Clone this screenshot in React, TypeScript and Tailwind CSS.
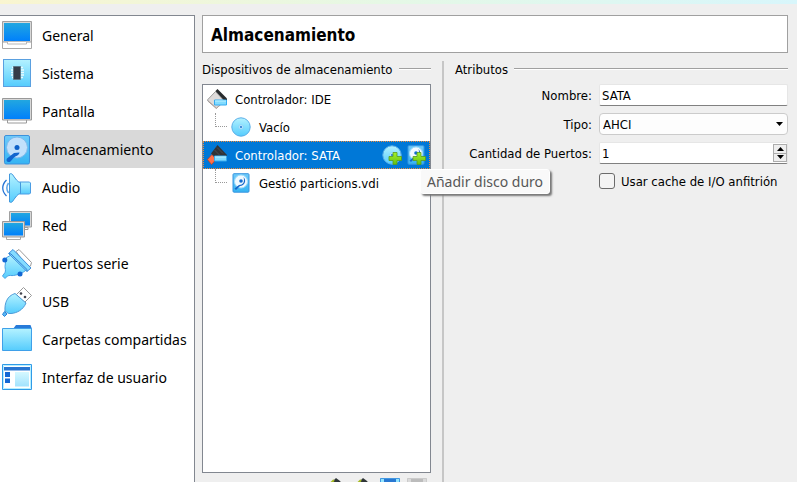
import React, { useState } from "react";

const Gradients = () => (
  <svg width="0" height="0" className="absolute" aria-hidden="true">
    <defs>
      <linearGradient id="screen" x1="0" y1="0" x2="0" y2="1">
        <stop offset="0" stopColor="#22a7e0" />
        <stop offset="1" stopColor="#0080fb" />
      </linearGradient>
      <linearGradient id="sky" x1="0" y1="0" x2="0" y2="1">
        <stop offset="0" stopColor="#b4f2ff" />
        <stop offset="1" stopColor="#55ccfd" />
      </linearGradient>
      <linearGradient id="disk" x1="0" y1="0" x2="0" y2="1">
        <stop offset="0" stopColor="#6fcbfa" />
        <stop offset="1" stopColor="#35b4f3" />
      </linearGradient>
      <linearGradient id="plus" x1="0" y1="0" x2="0" y2="1">
        <stop offset="0" stopColor="#a6f02c" />
        <stop offset="1" stopColor="#62c010" />
      </linearGradient>
    </defs>
  </svg>
);

const Svg30 = ({ children }: { children: React.ReactNode }) => (
  <svg width="30" height="30" viewBox="0 0 30 30" fill="none" className="shrink-0" aria-hidden="true">
    {children}
  </svg>
);

const GeneralIcon = () => (
  <Svg30>
    <path d="M.5 20.5h29v7h-29z" fill="#fff" stroke="#a8a8a8" />
    <path d="M.5 .5h29v20.500h-29z" fill="#d8d8d8" stroke="#a0a0a0" />
    <path d="M2 2h26v18h-26z" fill="url(#screen)" />
    <path d="M5.500 21v2h19v-2" fill="#fff" stroke="#b8b8b8" />
  </Svg30>
);

const SystemIcon = () => (
  <Svg30>
    <rect x="1.500" y=".5" width="27" height="27" fill="url(#sky)" stroke="#5aa0e0" />
    <path d="M10 8.500h11M9 11h13M9 13.500h13M9 16h13M10 18.500h11" stroke="#e9fbff" strokeWidth="1.300" />
    <path d="M11.500 7.500h7v13h-7z" fill="#353c48" stroke="#5b7888" />
  </Svg30>
);

const DisplayIcon = () => (
  <Svg30>
    <path d="M5.500 23v3h19v-3" fill="#fff" stroke="#9a9a9a" />
    <path d="M.5 1.500h29V23h-29z" fill="#d8d8d8" stroke="#999" />
    <path d="M2 3h26v19h-26z" fill="url(#screen)" />
  </Svg30>
);

const StorageIcon = () => (
  <Svg30>
    <rect x="2.500" y=".5" width="25" height="28.500" rx="1.500" fill="url(#disk)" stroke="#3c91dc" />
    <circle cx="15" cy="12.500" r="10.500" fill="#c2e0fb" stroke="#7eb9ed" />
    <circle cx="15" cy="12.500" r="2.500" fill="#0e61c8" />
    <path d="M17.500 17.500c-.8 3.500-3.500 3-6 5.500l-3 3.500c-2.500 1.500-5-.5-3.500-3l7-5.500z" fill="#1265ce" />
  </Svg30>
);

const AudioIcon = () => (
  <Svg30>
    <path d="M6.500 10C4.500 13 4.500 17 6.500 20" stroke="#5fa6e8" strokeWidth="1.500" />
    <path d="M4.500 7C-.5 12-.5 18 4.500 23" stroke="#2474d5" strokeWidth="1.300" />
    <path d="M18 9h9.500l1 1v10l-1 1H18z" fill="url(#sky)" stroke="#4b9de4" />
    <path d="M7.500 1c2-.8 3 0 4 2l3 4q1.500 2 4 2.500v11q-2.500.5-4 2.500l-3 4c-1 2-2 2.800-4 2z" fill="url(#sky)" stroke="#4298dd" />
  </Svg30>
);

const NetworkIcon = () => (
  <Svg30>
    <path d="M12 16.500h14v2H12z" fill="#fff" stroke="#999" />
    <path d="M7.500 .5h22V16h-22z" fill="#d7d7d7" stroke="#a0a0a0" />
    <path d="M9 2h19v12.500H9z" fill="url(#screen)" />
    <path d="M4.500 26v2.500h14V26" fill="#fff" stroke="#aaa" />
    <path d="M.5 10.500h22V26H.5z" fill="#d7d7d7" stroke="#999" />
    <path d="M2 12h19v12.500H2z" fill="url(#screen)" />
  </Svg30>
);

const SerialIcon = () => (
  <Svg30>
    <path d="m14 2.500 3-2 12.500 13-1 3.500-3 1z" fill="#fff" stroke="#9b9b9b" />
    <path d="M9 6 25 20.500l-3.500 2.500-3 2-7 1.500c-2 .3-4-.5-6 .5L3 29.500.5 27 3 23.500c1-2 0-4 0-6L4 9z" fill="url(#sky)" stroke="#48a2e5" />
    <path d="m6.500 4.500 4.500-4L29 19l-4 3.500z" fill="#84dcff" stroke="#3f8fdb" />
    <path d="m7 4.500 2 .5 16 15.500v2" stroke="#347fd1" />
    <circle cx="2.800" cy="11" r="2.500" fill="#1267d3" />
    <circle cx="18" cy="25" r="2.500" fill="#1267d3" />
  </Svg30>
);

const UsbIcon = () => (
  <Svg30>
    <path d="m14.500 7.500 7-7 8 8-7 7z" fill="#fff" stroke="#999" />
    <circle cx="19" cy="6.500" r="1.300" fill="#42434d" />
    <circle cx="23" cy="10" r="1.300" fill="#42434d" />
    <path d="m13 6.500 11 9.500c-3 7-9 10-15 10.500H6.500L3 24C2.500 16 5 9 13 6.500z" fill="url(#sky)" stroke="#4d9bd8" />
    <path d="m2.500 24.500 2.500 2.500-2.500 2.500-2-2z" fill="#57b4f2" stroke="#2984d7" />
  </Svg30>
);

const FolderIcon = () => (
  <Svg30>
    <path d="M11 4 14 0h14.500L30 4z" fill="#277ad8" />
    <path d="M.5 3.500h29v22H.5z" fill="url(#sky)" stroke="#3fa0e9" />
  </Svg30>
);

const InterfaceIcon = () => (
  <Svg30>
    <path d="M.5 1.500h29v25H.5z" fill="#fff" stroke="#309be8" />
    <path d="M1.500 2.500h27v23h-27z" stroke="#b5efff" />
    <path d="M2 4h26v3.500H2z" fill="#2875d1" />
    <path d="M3 9h5v5H3zM3 15.500h5v4.500H3z" fill="#1468d4" />
    <path d="M13 9h14v14.500H13z" fill="url(#sky)" opacity=".55" />
  </Svg30>
);

const ControllerIcon = ({ dark = false }: { dark?: boolean }) => (
  <svg width="20" height="20" viewBox="0 0 20 20" className="shrink-0" aria-hidden="true">
    {dark ? (
      <>
        <path d="m5 9.500 4 5-4.500 5-4-5z" fill="#ff7048" stroke="#c93e19" strokeWidth=".7" />
        <path d="m10.500 0 9.500 10v2H8L4 8.500z" fill="#303337" />
        <path d="m10 2.500 6 6M7.500 5l5 5" stroke="#4a4d50" />
      </>
    ) : (
      <>
        <path d="M8.500 2.500.8 10.500v1.500l8.500 7.500 8-7.500z" fill="#dedbda" stroke="#858585" strokeWidth=".8" />
        <path d="m1.500 12 8 7 4-3" stroke="#b9a49c" fill="none" strokeWidth=".8" />
        <path d="m8.500 2 2-2L20 9.500V12h-2.500z" fill="#282c2e" />
      </>
    )}
    <path d="M7.500 11h12v5h-12z" fill="#82dcff" stroke="#35aaf0" />
    <path d="M8 12h11" stroke="#bff2ff" />
  </svg>
);

const DiscShape = () => (
  <>
    <circle cx="10" cy="10" r="9.200" fill="url(#sky)" stroke="#5aaee8" />
    <circle cx="10" cy="10" r="2.300" fill="#b8e7ff" stroke="#8accf3" strokeWidth=".6" />
    <circle cx="10" cy="10" r=".9" fill="#0e66cc" />
  </>
);

const SmallDisk = () => (
  <>
    <rect x="2" y=".7" width="16" height="18.500" rx="1" fill="url(#disk)" stroke="#3994df" />
    <circle cx="10" cy="8.500" r="6.500" fill="#f0faff" stroke="#a4dcfa" />
    <circle cx="10" cy="8" r="1.800" fill="#126bd0" />
    <path d="M12.500 4c3.500 4 1 8.500-3.500 9l-4 4-1.500-1.500L8 12c4 0 6-3 4.500-8z" fill="#1766c9" />
  </>
);

const Plus = () => (
  <path d="M11 7.500h4v4h4.500v4H15v4h-4v-4H7v-4h4z" fill="url(#plus)" stroke="#559c20" strokeWidth=".8" />
);

const Svg20 = ({ children }: { children: React.ReactNode }) => (
  <svg width="20" height="20" viewBox="0 0 20 20" fill="none" className="shrink-0" aria-hidden="true">
    {children}
  </svg>
);

const AddControllerIcon = () => (
  <Svg20>
    <path d="m10 0 4 3 3 4H3l4-4z" fill="#303638" />
    <path d="m5 5 3-3" stroke="#a7bb24" strokeWidth="2" />
  </Svg20>
);

const AttachIcon = ({ disabled = false }: { disabled?: boolean }) => (
  <Svg20>
    <rect width="20" height="20" rx="1" fill={disabled ? "#dadada" : "#91e4ff"} />
    <path d="M4 0h12v9H4z" fill={disabled ? "#bcbcbc" : "#2878d2"} />
    <path d="M.5 20V.5h19V20" stroke={disabled ? "#cbcbcb" : "#4297e1"} />
  </Svg20>
);

const sections: { label: string; icon: React.FC }[] = [
  { label: "General", icon: GeneralIcon },
  { label: "Sistema", icon: SystemIcon },
  { label: "Pantalla", icon: DisplayIcon },
  { label: "Almacenamiento", icon: StorageIcon },
  { label: "Audio", icon: AudioIcon },
  { label: "Red", icon: NetworkIcon },
  { label: "Puertos serie", icon: SerialIcon },
  { label: "USB", icon: UsbIcon },
  { label: "Carpetas compartidas", icon: FolderIcon },
  { label: "Interfaz de usuario", icon: InterfaceIcon },
];

const GroupHeading = ({ children }: { children: React.ReactNode }) => (
  <h2 className="flex h-4 items-center gap-[6px] whitespace-nowrap">
    <span className="pt-[2px]">{children}</span>
    <span className="h-[2px] flex-1 border-t border-[#a0a0a0] bg-white" />
  </h2>
);

const Branch = () => (
  <span className="h-7 w-3 shrink-0" aria-hidden="true">
    <span className="block h-[14px] border-b border-l border-dotted border-[#999]" />
  </span>
);

export default function App() {
  const [section, setSection] = useState("Almacenamiento");
  const [name, setName] = useState("SATA");
  const [ports, setPorts] = useState(1);

  return (
    <div className="flex h-screen flex-col overflow-hidden bg-[#efefef] font-['DejaVu_Sans_Condensed','DejaVu_Sans',sans-serif] text-[13px] leading-4 text-black">
      <Gradients />
      <div className="h-1 shrink-0 bg-linear-to-r from-[#f9f5d0] via-[#e5f8e6] to-[#d8f6fb]" />
      <div className="flex min-h-0 flex-1 gap-[7px] pt-[11px] pr-[9px]">
        <nav className="w-[195px] shrink-0 border-t border-r border-[#828790] bg-white font-['Noto_Sans',sans-serif] text-[14px]">
          {sections.map(({ label, icon: Icon }) => (
            <button
              key={label}
              type="button"
              onClick={() => setSection(label)}
              className={`flex h-[38px] w-full items-center gap-[10px] pt-[2px] pl-[2px] whitespace-nowrap ${
                section === label ? "bg-[#d9d9d9]" : ""
              }`}
            >
              <Icon />
              {label}
            </button>
          ))}
        </nav>

        <main className="flex min-w-0 flex-1 flex-col">
          <h1 className="flex h-[38px] shrink-0 items-center border border-[#a0a0a0] bg-white px-2 pt-px text-[17px] font-bold">
            Almacenamiento
          </h1>

          <div className="flex min-h-0 flex-1 pt-2">
            <section className="flex w-[229px] shrink-0 flex-col">
              <GroupHeading>Dispositivos de almacenamiento</GroupHeading>
              <ul className="mt-[7px] min-h-0 flex-1 border border-[#828790] bg-white">
                <li className="flex h-7 items-center gap-2 pl-1">
                  <ControllerIcon />
                  <span className="pt-[2px]">Controlador: IDE</span>
                </li>
                <li className="flex h-7 items-center pl-3">
                  <Branch />
                  <span className="flex items-center gap-2 pl-1">
                    <Svg20>
                      <DiscShape />
                    </Svg20>
                    <span className="pt-[2px]">Vacío</span>
                  </span>
                </li>
                <li className="relative flex h-7 items-center border border-dotted border-[#ef8b3a] bg-[#0078d7] pr-[3px] pl-[3px] text-white">
                  <ControllerIcon dark />
                  <span className="flex-1 pt-[2px] pl-2">Controlador: SATA</span>
                  <span className="flex gap-1">
                    <button type="button" aria-label="Añadir unidad óptica">
                      <Svg20>
                        <DiscShape />
                        <Plus />
                      </Svg20>
                    </button>
                    <button type="button" aria-describedby="add-disk-tip" aria-label="Añadir disco duro">
                      <Svg20>
                        <SmallDisk />
                        <Plus />
                      </Svg20>
                    </button>
                  </span>
                  <span
                    id="add-disk-tip"
                    role="tooltip"
                    className="absolute top-[27px] left-[216px] z-10 rounded-[3px] border border-white bg-[#f9f9f9] px-[6px] pt-[2px] pb-px font-['Noto_Sans',sans-serif] text-[14px] leading-5 whitespace-nowrap text-[#575757] shadow-[2px_2px_2px_#777]"
                  >
                    Añadir disco duro
                  </span>
                </li>
                <li className="flex h-7 items-center pl-3">
                  <Branch />
                  <span className="flex items-center gap-2 pl-1">
                    <Svg20>
                      <SmallDisk />
                    </Svg20>
                    <span className="pt-[2px]">Gestió particions.vdi</span>
                  </span>
                </li>
              </ul>
              <div className="flex h-[9px] shrink-0 items-start justify-end gap-[7px] overflow-hidden pt-[5px] pr-1">
                <button type="button" aria-label="Añadir controlador">
                  <AddControllerIcon />
                </button>
                <button type="button" aria-label="Eliminar controlador">
                  <AddControllerIcon />
                </button>
                <button type="button" aria-label="Añadir conexión">
                  <AttachIcon />
                </button>
                <button type="button" aria-label="Eliminar conexión" disabled>
                  <AttachIcon disabled />
                </button>
              </div>
            </section>

            <div className="ml-[11px] w-[2px] shrink-0 bg-[#c6c6c6]" />

            <section className="min-w-0 flex-1 pl-[11px]">
              <GroupHeading>Atributos</GroupHeading>
              <form className="mt-[7px] grid grid-cols-[137px_minmax(0,1fr)] items-center gap-x-[7px] gap-y-[7px]">
                <label htmlFor="name" className="pt-[2px] text-right">
                  Nombre:
                </label>
                <input
                  id="name"
                  value={name}
                  onChange={(e) => setName(e.target.value)}
                  className="h-[22px] w-full rounded-[2px] border border-[#e6e6e6] border-b-[#808080] bg-white px-[2px] pt-px outline-none"
                />

                <label htmlFor="type" className="pt-[2px] text-right">
                  Tipo:
                </label>
                <div className="relative">
                  <select
                    id="type"
                    defaultValue="AHCI"
                    className="block h-[22px] w-full appearance-none rounded-[4px] border border-[#cbcbcb] bg-[#fdfdfd] px-[3px] pt-px outline-none"
                  >
                    <option>AHCI</option>
                  </select>
                  <svg width="7" height="4" viewBox="0 0 7 4" className="pointer-events-none absolute top-[9px] right-[5px]" aria-hidden="true">
                    <path d="M0 0h7L3.500 4z" />
                  </svg>
                </div>

                <label htmlFor="ports" className="pt-[2px] text-right">
                  Cantidad de Puertos:
                </label>
                <div className="flex h-[22px] rounded-[2px] border border-[#e6e6e6] border-b-[#808080] bg-white">
                  <input
                    id="ports"
                    value={ports}
                    onChange={(e) => setPorts(Number(e.target.value) || 1)}
                    className="min-w-0 flex-1 px-[2px] pt-px outline-none"
                  />
                  <div className="flex w-[14px] flex-col py-px">
                    <button
                      type="button"
                      aria-label="Aumentar"
                      onClick={() => setPorts(ports + 1)}
                      className="flex flex-1 items-center justify-center border border-[#adadad] bg-[#efefef]"
                    >
                      <svg width="7" height="4" viewBox="0 0 7 4">
                        <path d="M0 4h7L3.500 0z" />
                      </svg>
                    </button>
                    <button
                      type="button"
                      aria-label="Disminuir"
                      onClick={() => setPorts(Math.max(1, ports - 1))}
                      className="flex flex-1 items-center justify-center border border-t-0 border-[#adadad] bg-[#efefef]"
                    >
                      <svg width="7" height="4" viewBox="0 0 7 4">
                        <path d="M0 0h7L3.500 4z" />
                      </svg>
                    </button>
                  </div>
                </div>

                <label className="col-start-2 flex h-5 items-center gap-[6px] whitespace-nowrap">
                  <input
                    type="checkbox"
                    className="size-4 shrink-0 appearance-none rounded-[3px] border border-[#6b6b6b] bg-[#f4f4f4] checked:bg-[#0078d7]"
                  />
                  <span className="pt-[2px]">Usar cache de I/O anfitrión</span>
                </label>
              </form>
            </section>
          </div>
        </main>
      </div>
    </div>
  );
}
